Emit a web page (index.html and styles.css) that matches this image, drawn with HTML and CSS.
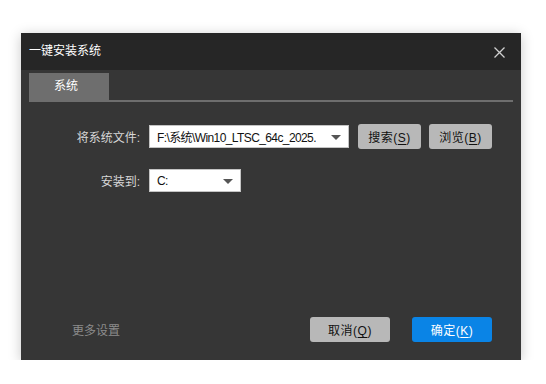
FILE: index.html
```html
<!DOCTYPE html>
<html lang="zh-CN">

<head>
    <meta charset="UTF-8">
    <title>一键安装系统</title>
    <link rel="stylesheet" href="styles.css">
</head>

<body>
    <div class="dialog">
        <div class="titlebar">
            <span class="title">一键安装系统</span>
            <svg class="close" width="11" height="11" viewBox="0 0 11 11">
                <path d="M0.5 0.5 L10.5 10.5 M10.5 0.5 L0.5 10.5" stroke="#d0d0d0" stroke-width="1.3" fill="none" />
            </svg>
        </div>

        <div class="tabs">
            <div class="tab">系统</div>
        </div>

        <div class="form">
            <div class="row">
                <label class="label">将系统文件:</label>
                <div class="combo combo-wide">
                    <span class="combo-text">F:\系统\Win10_LTSC_64c_2025.</span>
                    <span class="arrow"></span>
                </div>
                <button class="btn">搜索(<u>S</u>)</button>
                <button class="btn">浏览(<u>B</u>)</button>
            </div>
            <div class="row">
                <label class="label">安装到:</label>
                <div class="combo combo-small">
                    <span class="combo-text">C:</span>
                    <span class="arrow"></span>
                </div>
            </div>
        </div>

        <div class="footer">
            <span class="more">更多设置</span>
            <div class="actions">
                <button class="btn btn-big">取消(<u>Q</u>)</button>
                <button class="btn btn-big btn-primary">确定(<u>K</u>)</button>
            </div>
        </div>
    </div>
</body>

</html>
```

FILE: styles.css
```css
/* Page */
body {
    margin: 0;
    background: #ffffff;
    font-family: 'Liberation Sans', 'Noto Sans CJK SC', sans-serif;
    font-size: 12px;
}

/* Dialog window */
.dialog {
    width: 500px;
    height: 327px;
    margin: 33px 0 0 21px;
    background: #363636;
    display: flex;
    flex-direction: column;
    box-shadow: 0 2px 12px rgba(0, 0, 0, 0.22);
}

.titlebar {
    height: 37px;
    background: #262626;
    display: flex;
    align-items: center;
    justify-content: space-between;
    padding: 0 16px 0 8px;
}

.title {
    color: #ffffff;
    font-size: 12px;
    margin-top: -5px;
}

.close {
    display: block;
    margin-top: 1px;
}

/* Tabs */
.tabs {
    margin: 3px 8px 0 8px;
    border-bottom: 2px solid #6e6e6e;
    display: flex;
}

.tab {
    width: 80px;
    height: 27px;
    line-height: 27px;
    background: #6e6e6e;
    color: #ffffff;
    text-align: center;
    padding-right: 6px;
    box-sizing: border-box;
}

/* Form rows */
.form {
    margin-top: 22px;
    display: flex;
    flex-direction: column;
    gap: 20px;
}

.row {
    display: flex;
    align-items: center;
}

.label {
    width: 119px;
    text-align: right;
    color: #d6d6d6;
    margin-right: 9px;
}

.combo {
    height: 23px;
    box-sizing: border-box;
    background: #ffffff;
    border: 1px solid #c4c4c4;
    display: flex;
    align-items: center;
    justify-content: space-between;
    padding: 0 7px;
    color: #111111;
}

.combo-text {
    white-space: nowrap;
    overflow: hidden;
    letter-spacing: -0.6px;
}

.combo-wide {
    width: 200px;
    margin-right: 9px;
}

.combo-small {
    width: 92px;
}

.arrow {
    flex-shrink: 0;
    width: 0;
    height: 0;
    border-left: 5px solid transparent;
    border-right: 5px solid transparent;
    border-top: 5px solid #555555;
    margin-top: 1px;
    margin-left: 6px;
}

/* Buttons */
.btn {
    width: 63px;
    height: 25px;
    border: none;
    border-radius: 3px;
    background: #b8b8b8;
    color: #111111;
    font-family: 'Liberation Sans', 'Noto Sans CJK SC', sans-serif;
    font-size: 12px;
    padding: 0;
    margin-right: 8px;
    letter-spacing: 0.5px;
}

.btn u {
    text-underline-offset: 2px;
}

/* Footer */
.footer {
    margin-top: auto;
    display: flex;
    align-items: center;
    justify-content: space-between;
    padding: 0 29px 18px 51px;
}

.more {
    color: #8c8c8c;
}

.actions {
    display: flex;
    gap: 22px;
}

.btn-big {
    width: 80px;
    margin-right: 0;
}

.btn-primary {
    background: #0a84e6;
    color: #ffffff;
}
```
